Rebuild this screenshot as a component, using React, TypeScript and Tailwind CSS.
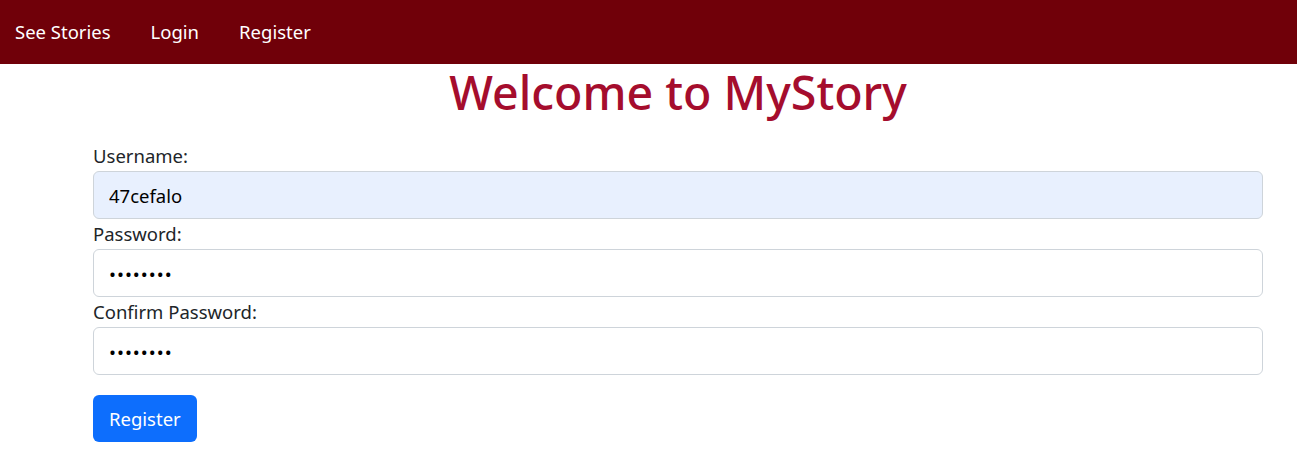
import React from "react";

export default function App() {
  const font = { fontFamily: '"Noto Sans", "Open Sans", sans-serif' };
  return (
    <div className="min-h-[469px] bg-white text-[#212529]" style={font}>
      <nav className="h-[64px] bg-[#700009] flex items-center pl-[15px] gap-[40px] text-[18.5px] text-white">
        <a className="leading-[30px]">See Stories</a>
        <a className="leading-[30px]">Login</a>
        <a className="leading-[30px]">Register</a>
      </nav>
      <main className="ml-[93px] w-[1170px]">
        <h1 className="text-center text-[46.5px] leading-[56px] font-medium text-[#a50d2d] mb-[21px]">
          Welcome to MyStory
        </h1>
        <form className="flex flex-col">
          <label className="text-[18.5px] leading-[30px]">Username:</label>
          <input
            className="h-[48px] rounded-[6px] border border-[#ced4da] bg-[#e8f0fe] px-[15px] text-[18.5px] text-black outline-none"
            defaultValue="47cefalo"
          />
          <label className="text-[18.5px] leading-[30px]">Password:</label>
          <input
            type="password"
            className="h-[48px] rounded-[6px] border border-[#ced4da] bg-white px-[15px] text-[18.5px] tracking-[1px] text-black outline-none"
            defaultValue="password"
          />
          <label className="text-[18.5px] leading-[30px]">Confirm Password:</label>
          <input
            type="password"
            className="h-[48px] rounded-[6px] border border-[#ced4da] bg-white px-[15px] text-[18.5px] tracking-[1px] text-black outline-none"
            defaultValue="password"
          />
          <div className="mt-[20px]">
            <button
              type="button"
              className="h-[47px] px-[16px] rounded-[6px] bg-[#0d6efd] text-white text-[18.5px]"
            >
              Register
            </button>
          </div>
        </form>
      </main>
    </div>
  );
}
